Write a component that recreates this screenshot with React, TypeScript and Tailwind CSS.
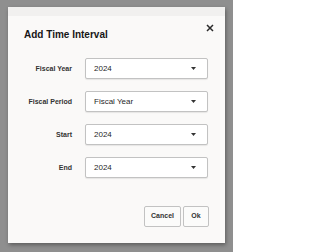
import React from 'react';

const rows = [
  { label: 'Fiscal Year', value: '2024' },
  { label: 'Fiscal Period', value: 'Fiscal Year' },
  { label: 'Start', value: '2024' },
  { label: 'End', value: '2024' },
];

const Chevron = () => (
  <svg width="5" height="3" viewBox="0 0 5 3" className="shrink-0">
    <path d="M0 0h5L2.5 3z" fill="#333" />
  </svg>
);

const SelectBox = ({ value }: { value: string }) => (
  <div className="flex h-[21px] w-[123px] items-center justify-between rounded-[2px] border border-[#c2c2c2] bg-white pl-[8px] pr-[11px] shadow-[0_1px_1px_rgba(0,0,0,0.08)]">
    <span className="text-[8px] leading-none text-[#1f1f1f]">{value}</span>
    <Chevron />
  </div>
);

export default function App() {
  return (
    <div
      className="h-[252px] w-[233px] overflow-hidden bg-[#8f8f8f] pl-[8px] pt-[7px]"
      style={{ fontFamily: '"Liberation Sans", Arial, sans-serif' }}
    >
      <div className="relative flex h-[236px] w-[217px] flex-col bg-[#faf9f8] shadow-[1px_2px_4px_rgba(0,0,0,0.35)]">
        <div className="h-[9px] bg-[#f1f0ef]" />

        <button className="absolute right-[11px] top-[17px] flex h-[8px] w-[8px] items-center justify-center">
          <svg width="8" height="8" viewBox="0 0 8 8">
            <path d="M1 1L7 7M7 1L1 7" stroke="#2a2a2a" strokeWidth="1.5" />
          </svg>
        </button>

        <h2 className="ml-[16px] mt-[13px] text-[10px] font-bold leading-[12px] text-[#161616]">
          Add Time Interval
        </h2>

        <div className="mt-[17px] flex flex-col gap-[12px]">
          {rows.map((row) => (
            <div key={row.label} className="flex items-center gap-[13px]">
              <span className="w-[64px] text-right text-[7px] font-semibold leading-none text-[#333]">
                {row.label}
              </span>
              <SelectBox value={row.value} />
            </div>
          ))}
        </div>

        <div className="mr-[16px] mt-[28px] flex justify-end gap-[2px]">
          <button className="h-[21px] w-[37px] rounded-[2px] border border-[#c2c2c2] bg-[#fbfbfa] text-[7px] font-semibold text-[#333]">
            Cancel
          </button>
          <button className="h-[21px] w-[26px] rounded-[2px] border border-[#c2c2c2] bg-[#fbfbfa] text-[7px] font-semibold text-[#333]">
            Ok
          </button>
        </div>
      </div>
    </div>
  );
}
